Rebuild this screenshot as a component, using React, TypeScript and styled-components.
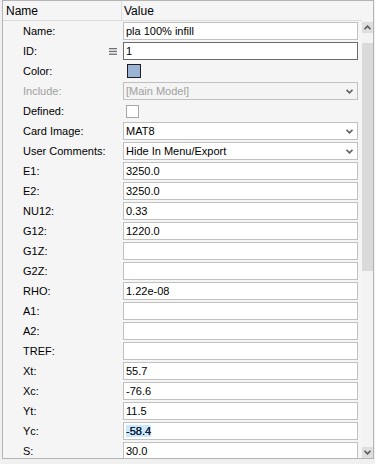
import React from 'react'
import styled, { createGlobalStyle, css } from 'styled-components'

const GlobalStyle = createGlobalStyle`
  html, body {
    margin: 0;
    padding: 0;
    background: #f0f0f0;
  }
  body {
    font-family: 'Liberation Sans', Arial, sans-serif;
  }
`

type Row = {
  label: string
  kind: 'text' | 'color' | 'select' | 'check'
  value?: string
  disabled?: boolean
  focused?: boolean
  menu?: boolean
  selected?: boolean
}

const rows: Row[] = [
  { label: 'Name:', kind: 'text', value: 'pla 100% infill' },
  { label: 'ID:', kind: 'text', value: '1', focused: true, menu: true },
  { label: 'Color:', kind: 'color' },
  { label: 'Include:', kind: 'select', value: '[Main Model]', disabled: true },
  { label: 'Defined:', kind: 'check' },
  { label: 'Card Image:', kind: 'select', value: 'MAT8' },
  { label: 'User Comments:', kind: 'select', value: 'Hide In Menu/Export' },
  { label: 'E1:', kind: 'text', value: '3250.0' },
  { label: 'E2:', kind: 'text', value: '3250.0' },
  { label: 'NU12:', kind: 'text', value: '0.33' },
  { label: 'G12:', kind: 'text', value: '1220.0' },
  { label: 'G1Z:', kind: 'text', value: '' },
  { label: 'G2Z:', kind: 'text', value: '' },
  { label: 'RHO:', kind: 'text', value: '1.22e-08' },
  { label: 'A1:', kind: 'text', value: '' },
  { label: 'A2:', kind: 'text', value: '' },
  { label: 'TREF:', kind: 'text', value: '' },
  { label: 'Xt:', kind: 'text', value: '55.7' },
  { label: 'Xc:', kind: 'text', value: '-76.6' },
  { label: 'Yt:', kind: 'text', value: '11.5' },
  { label: 'Yc:', kind: 'text', value: '-58.4', selected: true },
  { label: 'S:', kind: 'text', value: '30.0' },
]

const Frame = styled.div`
  margin-left: 2px;
  width: 372px;
  height: 459px;
  box-sizing: border-box;
  border: 1px solid #b4b4b4;
  background: #f5f5f5;
  display: grid;
  grid-template-columns: 359px 11px;
  grid-template-rows: 20px 1fr;
  overflow: hidden;
`

const Header = styled.div`
  display: grid;
  grid-template-columns: 119px 1fr;
  border-bottom: 1px solid #dcdcdc;
  font-size: 12px;
  color: #000;
`

const HeaderCell = styled.div<{ $first?: boolean }>`
  display: flex;
  align-items: center;
  padding-left: ${(p) => (p.$first ? '3px' : '2px')};
  ${(p) => p.$first && css`border-right: 1px solid #dcdcdc;`}
`

const Corner = styled.div``

const Body = styled.div`
  overflow: hidden;
`

const PropRow = styled.div`
  display: grid;
  grid-template-columns: 120px 235px;
  height: 20px;
  align-items: center;
  font-size: 11px;
`

const Label = styled.div<{ $disabled?: boolean }>`
  display: flex;
  align-items: center;
  justify-content: space-between;
  padding-left: 20px;
  padding-right: 6px;
  color: ${(p) => (p.$disabled ? '#a0a0a0' : '#000')};
  white-space: nowrap;
`

const Field = styled.div<{ $focused?: boolean; $disabled?: boolean; $select?: boolean }>`
  height: 18px;
  box-sizing: border-box;
  border: 1px solid ${(p) => (p.$focused ? '#6a6a6a' : '#c0c0c0')};
  background: ${(p) => (p.$disabled ? '#f4f4f4' : '#fff')};
  color: ${(p) => (p.$disabled ? '#a0a0a0' : '#000')};
  display: flex;
  align-items: center;
  justify-content: space-between;
  padding: 0 4px 0 2px;
  white-space: nowrap;
  overflow: hidden;
`

const Selected = styled.span`
  background: #cce8ff;
  color: #0a1a30;
  text-shadow: 0 0 0.4px #0a1a30;
`

const Swatch = styled.div`
  width: 14px;
  height: 14px;
  margin-left: 4px;
  box-sizing: border-box;
  border: 1px solid #1e1e1e;
  background: #9bb4d6;
`

const CheckBox = styled.div`
  width: 13px;
  height: 13px;
  margin-left: 3px;
  box-sizing: border-box;
  border: 1px solid #a8a8a8;
  background: #fff;
`

const ScrollBar = styled.div`
  display: flex;
  flex-direction: column;
  padding-top: 1px;
  background: #f0f0f0;
`

const ScrollButton = styled.div`
  height: 11px;
  background: #dedede;
  display: flex;
  align-items: center;
  justify-content: center;
`

const Track = styled.div`
  flex: 1;
  padding-top: 10px;
  background: #f3f3f3;
`

const Thumb = styled.div`
  height: 228px;
  background: #dadada;
`

function Chevron({ up, color }: { up?: boolean; color: string }) {
  return (
    <svg width="7" height="5" viewBox="0 0 7 5" style={{ transform: up ? 'rotate(180deg)' : undefined }}>
      <path d="M0.5 0.8 L3.5 3.8 L6.5 0.8" fill="none" stroke={color} strokeWidth="1.8" />
    </svg>
  )
}

function MenuIcon() {
  return (
    <svg width="8" height="7" viewBox="0 0 8 7">
      <rect x="0" y="0" width="8" height="1.3" fill="#707070" />
      <rect x="0" y="2.8" width="8" height="1.3" fill="#707070" />
      <rect x="0" y="5.6" width="8" height="1.3" fill="#707070" />
    </svg>
  )
}

function ValueCell({ row }: { row: Row }) {
  if (row.kind === 'color') return <Swatch />
  if (row.kind === 'check') return <CheckBox />
  if (row.kind === 'select') {
    return (
      <Field $disabled={row.disabled} $select>
        <span>{row.value}</span>
        <Chevron color="#666666" />
      </Field>
    )
  }
  return (
    <Field $focused={row.focused}>
      {row.selected ? <Selected>{row.value}</Selected> : <span>{row.value}</span>}
    </Field>
  )
}

export default function App() {
  return (
    <>
      <GlobalStyle />
      <Frame>
        <Header>
          <HeaderCell $first>Name</HeaderCell>
          <HeaderCell>Value</HeaderCell>
        </Header>
        <Corner />
        <Body>
          {rows.map((row) => (
            <PropRow key={row.label}>
              <Label $disabled={row.disabled}>
                <span>{row.label}</span>
                {row.menu && <MenuIcon />}
              </Label>
              <ValueCell row={row} />
            </PropRow>
          ))}
        </Body>
        <ScrollBar>
          <ScrollButton>
            <Chevron up color="#606060" />
          </ScrollButton>
          <Track>
            <Thumb />
          </Track>
          <ScrollButton>
            <Chevron color="#606060" />
          </ScrollButton>
        </ScrollBar>
      </Frame>
    </>
  )
}
